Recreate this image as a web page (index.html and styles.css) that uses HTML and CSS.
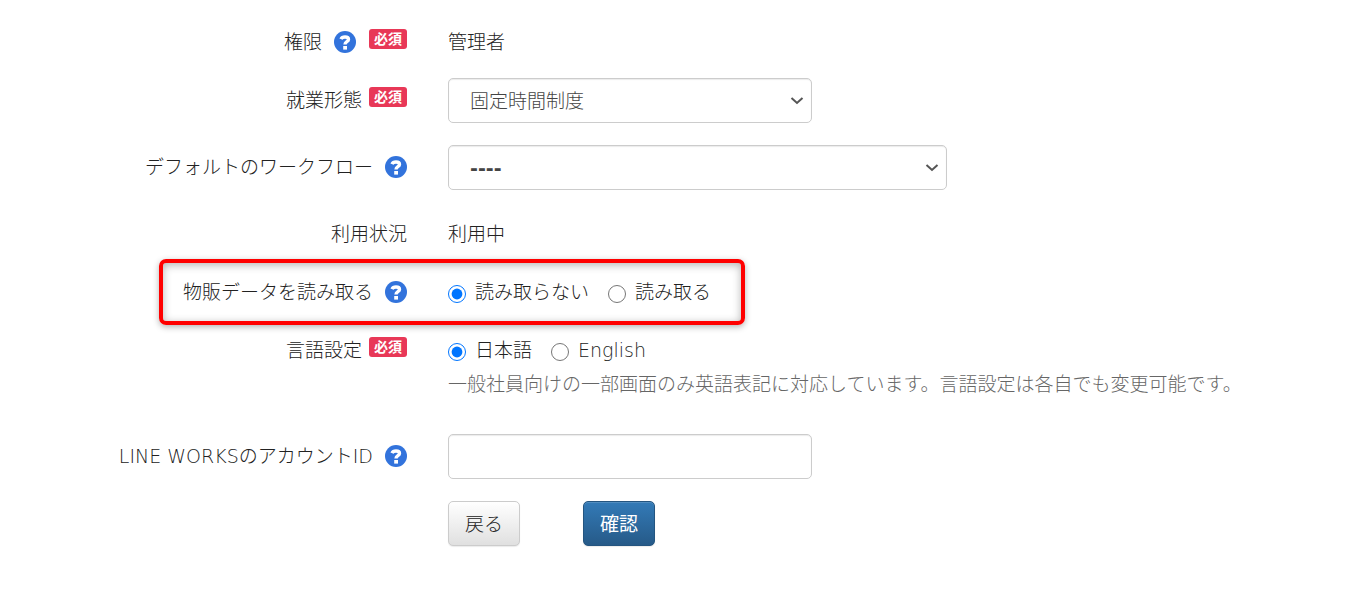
FILE: index.html
```html
<!DOCTYPE html>
<html lang="ja">
<head>
    <meta charset="UTF-8">
    <meta name="viewport" content="width=device-width, initial-scale=1.0">
    <title>従業員設定</title>
    <link rel="stylesheet" href="styles.css">
</head>
<body>

    <!-- アイコン -->
    <svg class="sprite" aria-hidden="true">
        <symbol id="help" viewBox="0 0 22 22">
            <circle cx="11" cy="11" r="11" fill="#3273dc"/>
            <path d="M7 8.2C7.6 6.8 9 6 11 6C13.4 6 14.5 6.9 14.5 8.5C14.5 10.8 11 10.6 11 13.4" fill="none" stroke="#fff" stroke-width="3.4"/>
            <rect x="9.2" y="15" width="3.8" height="3.6" fill="#fff"/>
        </symbol>
        <symbol id="arrow" viewBox="0 0 14 10">
            <path d="M1.5 2L7 7L12.5 2" fill="none" stroke="#555" stroke-width="2"/>
        </symbol>
    </svg>

    <form class="form">
        <div class="row">
            <div class="label">
                <span>権限</span>
                <a class="help" href="#" aria-label="ヘルプ"><svg><use href="#help"/></svg></a>
                <span class="badge">必須</span>
            </div>
            <div class="field">管理者</div>
        </div>

        <div class="row">
            <div class="label">
                <label for="workStyle">就業形態</label>
                <span class="badge">必須</span>
            </div>
            <div class="field select">
                <select class="control" id="workStyle" name="workStyle">
                    <option>固定時間制度</option>
                </select>
                <svg class="arrow" aria-hidden="true"><use href="#arrow"/></svg>
            </div>
        </div>

        <div class="row">
            <div class="label">
                <label for="workflow">デフォルトのワークフロー</label>
                <a class="help" href="#" aria-label="ヘルプ"><svg><use href="#help"/></svg></a>
            </div>
            <div class="field select">
                <select class="control control-wide" id="workflow" name="workflow">
                    <option>----</option>
                </select>
                <svg class="arrow" aria-hidden="true"><use href="#arrow"/></svg>
            </div>
        </div>

        <div class="row">
            <div class="label"><span>利用状況</span></div>
            <div class="field">利用中</div>
        </div>

        <div class="row" role="radiogroup" aria-labelledby="salesLabel">
            <div class="label">
                <span id="salesLabel">物販データを読み取る</span>
                <a class="help" href="#" aria-label="ヘルプ"><svg><use href="#help"/></svg></a>
            </div>
            <div class="field radios">
                <label class="radio"><input type="radio" name="sales" value="0" checked>読み取らない</label>
                <label class="radio"><input type="radio" name="sales" value="1">読み取る</label>
            </div>
            <div class="highlight"></div>
        </div>

        <div class="row row-help" role="radiogroup" aria-labelledby="langLabel">
            <div class="label">
                <span id="langLabel">言語設定</span>
                <span class="badge">必須</span>
            </div>
            <div class="field">
                <div class="radios">
                    <label class="radio"><input type="radio" name="lang" value="ja" checked>日本語</label>
                    <label class="radio"><input type="radio" name="lang" value="en">English</label>
                </div>
                <p class="note">一般社員向けの一部画面のみ英語表記に対応しています。言語設定は各自でも変更可能です。</p>
            </div>
        </div>

        <div class="row">
            <div class="label">
                <label for="lineWorksId">LINE WORKSのアカウントID</label>
                <a class="help" href="#" aria-label="ヘルプ"><svg><use href="#help"/></svg></a>
            </div>
            <div class="field">
                <input class="control" type="text" id="lineWorksId" name="lineWorksId">
            </div>
        </div>

        <div class="row">
            <div class="field buttons">
                <button class="btn" type="button">戻る</button>
                <button class="btn btn-primary" type="submit">確認</button>
            </div>
        </div>
    </form>

</body>
</html>
```
FILE: styles.css
```css
body {
    margin: 0;
    background-color: #fff;
    color: #222;
    font-family: "DejaVu Sans", "Noto Sans CJK JP", sans-serif;
    font-size: 19px;
    font-weight: 300;
    line-height: 28px;
}

.sprite {
    display: none;
}

.form {
    padding-top: 20px;
}

.row {
    position: relative;
    display: grid;
    grid-template-columns: 30% 1fr;
    column-gap: 40px;
    margin-bottom: 22px;
}

.row-help {
    margin-bottom: 36px;
}

.label {
    display: flex;
    justify-content: flex-end;
    align-items: center;
    height: 28px;
    padding-top: 8px;
    padding-right: 1px;
}

.help {
    margin-left: 12px;
}

.help svg {
    display: block;
    width: 22px;
    height: 22px;
}

.badge {
    margin-left: 7px;
    margin-bottom: 6px;
    padding: 0 5px;
    border-radius: 3px;
    background-color: #e83857;
    color: #fff;
    font-size: 14px;
    font-weight: 700;
    line-height: 20px;
}

.help + .badge {
    margin-left: 13px;
}

.field {
    grid-column: 2;
    padding-top: 8px;
}

.field:has(.control),
.buttons {
    padding-top: 0;
}

.select {
    display: flex;
    align-items: center;
}

.control {
    display: block;
    box-sizing: border-box;
    width: 364px;
    max-width: 100%;
    height: 45px;
    padding: 0 21px;
    border: 1px solid #ccc;
    border-radius: 5px;
    background-color: #fff;
    box-shadow: inset 0 1px 1px rgba(0, 0, 0, 0.08);
    color: #444;
    font: inherit;
    appearance: none;
}

.control-wide {
    width: 499px;
    font-weight: 700;
}

.arrow {
    width: 14px;
    height: 10px;
    margin-left: -22px;
    pointer-events: none;
}

.radios {
    display: flex;
    gap: 19px;
}

.radio {
    display: flex;
    align-items: center;
}

.radio input {
    width: 18px;
    height: 18px;
    margin: 3px 9px 0 0;
}

.note {
    margin: 6px 0 0;
    color: #666;
}

/* 強調枠 */
.highlight {
    position: absolute;
    top: -11px;
    left: 159px;
    box-sizing: border-box;
    width: 586px;
    height: 66px;
    border: 4px solid #f00;
    border-radius: 7px;
    box-shadow: 0 2px 6px rgba(0, 0, 0, 0.3), inset 0 2px 8px rgba(0, 0, 0, 0.3);
    pointer-events: none;
}

.buttons {
    display: flex;
    gap: 63px;
}

.btn {
    height: 45px;
    padding: 0 16px;
    border: 1px solid #ccc;
    border-radius: 5px;
    background-image: linear-gradient(#fff, #e0e0e0);
    box-shadow: inset 0 1px 0 rgba(255, 255, 255, 0.15), 0 1px 1px rgba(0, 0, 0, 0.08);
    color: #222;
    font: inherit;
    cursor: pointer;
}

.btn-primary {
    border-color: #245580;
    background-image: linear-gradient(#337ab7, #265a88);
    color: #fff;
    font-weight: 400;
}
```
